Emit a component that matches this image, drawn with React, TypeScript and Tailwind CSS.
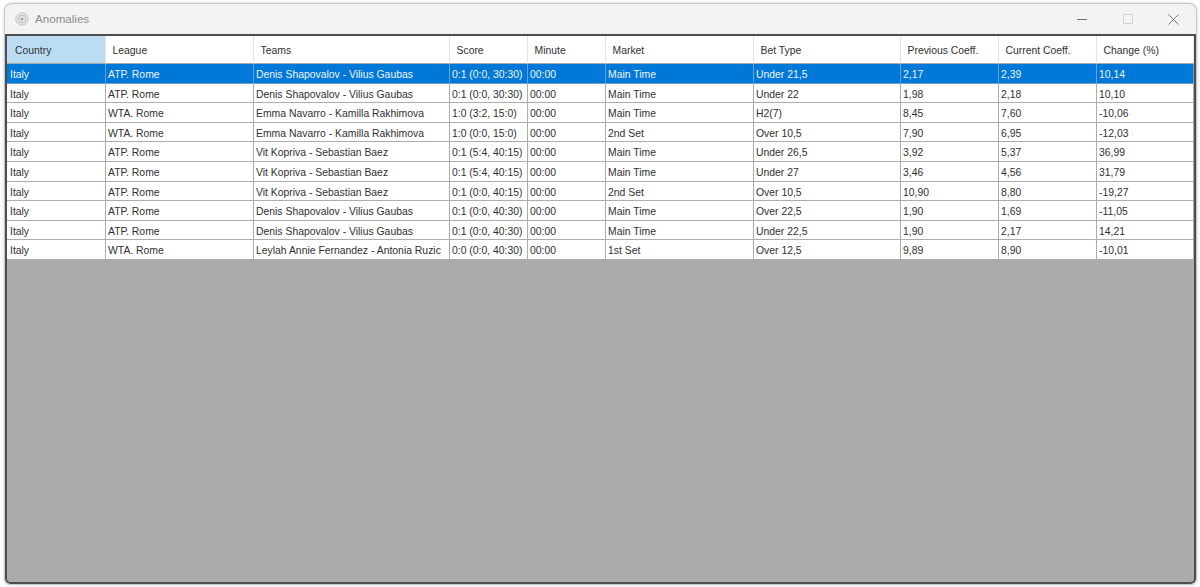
import React from 'react';

const columns = ['Country', 'League', 'Teams', 'Score', 'Minute', 'Market', 'Bet Type', 'Previous Coeff.', 'Current Coeff.', 'Change (%)'];

const rows = [
  ['Italy', 'ATP. Rome', 'Denis Shapovalov - Vilius Gaubas', '0:1 (0:0, 30:30)', '00:00', 'Main Time', 'Under 21,5', '2,17', '2,39', '10,14'],
  ['Italy', 'ATP. Rome', 'Denis Shapovalov - Vilius Gaubas', '0:1 (0:0, 30:30)', '00:00', 'Main Time', 'Under 22', '1,98', '2,18', '10,10'],
  ['Italy', 'WTA. Rome', 'Emma Navarro - Kamilla Rakhimova', '1:0 (3:2, 15:0)', '00:00', 'Main Time', 'H2(7)', '8,45', '7,60', '-10,06'],
  ['Italy', 'WTA. Rome', 'Emma Navarro - Kamilla Rakhimova', '1:0 (0:0, 15:0)', '00:00', '2nd Set', 'Over 10,5', '7,90', '6,95', '-12,03'],
  ['Italy', 'ATP. Rome', 'Vit Kopriva - Sebastian Baez', '0:1 (5:4, 40:15)', '00:00', 'Main Time', 'Under 26,5', '3,92', '5,37', '36,99'],
  ['Italy', 'ATP. Rome', 'Vit Kopriva - Sebastian Baez', '0:1 (5:4, 40:15)', '00:00', 'Main Time', 'Under 27', '3,46', '4,56', '31,79'],
  ['Italy', 'ATP. Rome', 'Vit Kopriva - Sebastian Baez', '0:1 (0:0, 40:15)', '00:00', '2nd Set', 'Over 10,5', '10,90', '8,80', '-19,27'],
  ['Italy', 'ATP. Rome', 'Denis Shapovalov - Vilius Gaubas', '0:1 (0:0, 40:30)', '00:00', 'Main Time', 'Over 22,5', '1,90', '1,69', '-11,05'],
  ['Italy', 'ATP. Rome', 'Denis Shapovalov - Vilius Gaubas', '0:1 (0:0, 40:30)', '00:00', 'Main Time', 'Under 22,5', '1,90', '2,17', '14,21'],
  ['Italy', 'WTA. Rome', 'Leylah Annie Fernandez - Antonia Ruzic', '0:0 (0:0, 40:30)', '00:00', '1st Set', 'Over 12,5', '9,89', '8,90', '-10,01'],
];

const gridCols = 'grid grid-cols-[99px_148px_196px_78px_78px_148px_147px_98px_98px_97px]';

const AppIcon = () => (
  <svg width="14" height="14" viewBox="0 0 14 14" fill="none">
    <circle cx="7" cy="7" r="6.2" fill="#e6e6e6" stroke="#c4c4c4" strokeWidth="1" />
    <circle cx="7" cy="7" r="3.8" fill="none" stroke="#bdbdbd" strokeWidth="1" />
    <circle cx="7" cy="7" r="1.6" fill="#a8a8a8" />
  </svg>
);

export default function App() {
  return (
    <div className="h-[587px] w-[1200px] overflow-hidden bg-white pl-[4px] pr-[3px] pt-[3px] pb-[2px] font-['Liberation_Sans',sans-serif]">
      <div className="flex h-full flex-col overflow-hidden rounded-t-lg rounded-b-md border border-[#c9c9c9] bg-[#f3f3f3] shadow-[0_0_3px_rgba(0,0,0,0.2)]">
        {/* Title bar */}
        <div className="flex h-[30px] shrink-0 items-center pl-[10px]">
          <AppIcon />
          <span className="ml-[6px] text-[11.6px] text-[#8c8c8c]">Anomalies</span>
          <div className="ml-auto flex items-center">
            <div className="flex w-[46px] justify-center">
              <div className="h-px w-[10px] bg-[#6e6e6e]" />
            </div>
            <div className="flex w-[46px] justify-center">
              <div className="h-[10px] w-[10px] rounded-[1px] border border-[#d4d4d4]" />
            </div>
            <div className="flex w-[45px] justify-center">
              <svg width="11" height="11" viewBox="0 0 11 11" stroke="#777777" strokeWidth="1" fill="none">
                <path d="M0.5 0.5 L10.5 10.5 M10.5 0.5 L0.5 10.5" />
              </svg>
            </div>
          </div>
        </div>

        {/* Grid */}
        <div className="min-h-0 flex-1 overflow-hidden rounded-b-[5px] border-2 border-[#4d4d4d] bg-[#ababab]">
          <div className={`${gridCols} h-[28px] bg-white`}>
            {columns.map((col, i) => (
              <div
                key={col}
                className={`flex items-center border-r border-b border-r-[#e4e4e4] border-b-[#a8a8a8] pt-[3px] text-[10.4px] text-[#303030] ${i === 0 ? 'bg-[#bcdcf4] pl-2' : 'bg-white pl-[6.5px]'}`}
              >
                {col}
              </div>
            ))}
          </div>
          {rows.map((row, r) => (
            <div key={r} className={`${gridCols} h-[19.6px]`}>
              {row.map((cell, c) => (
                <div
                  key={c}
                  className={`flex items-center overflow-hidden whitespace-nowrap border-r border-b pt-[3px] text-[10.4px] ${c === 0 ? 'pl-[3px]' : 'pl-[2px]'} ${r === 0 ? 'border-[#6a9fd0] bg-[#0078d7] text-[#eef5fc]' : 'border-[#adadad] bg-white text-[#303030]'}`}
                >
                  {cell}
                </div>
              ))}
            </div>
          ))}
        </div>
      </div>
    </div>
  );
}
